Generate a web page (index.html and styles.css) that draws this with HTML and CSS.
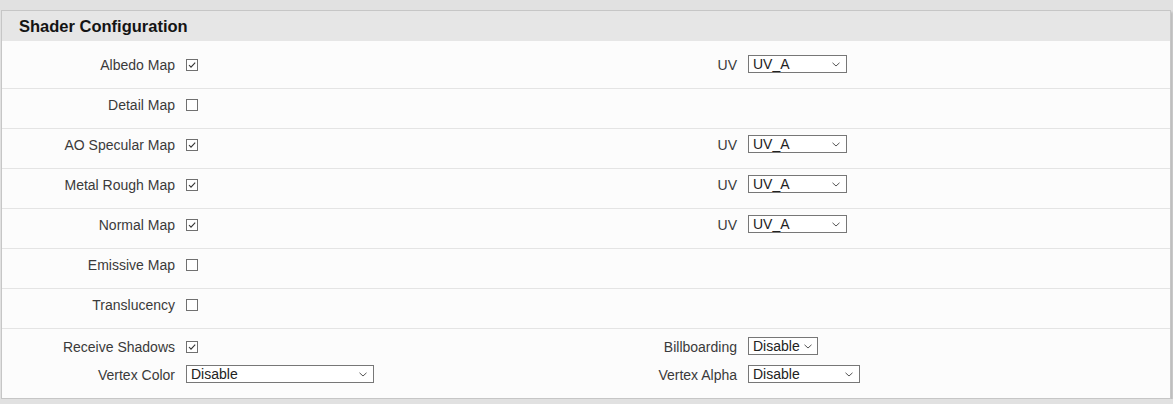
FILE: index.html
```html
<!DOCTYPE html>
<html>
<head>
<meta charset="utf-8">
<link rel="stylesheet" href="styles.css">
</head>
<body>
<div class="panel">
  <div class="panel-head">Shader Configuration</div>
  <div class="panel-body">
    <div class="row">
      <span class="label">Albedo Map</span>
      <span class="check checked"><svg viewBox="0 0 12 12"><polyline points="3,6 5,8.2 9.2,3.6"/></svg></span>
      <span class="label">UV</span>
      <span class="select w-uv"><span class="sel-text">UV_A</span><svg class="chev" viewBox="0 0 8 5"><polyline points="0.5,0.8 4,4 7.5,0.8"/></svg></span>
    </div>
    <div class="row">
      <span class="label">Detail Map</span>
      <span class="check"></span>
    </div>
    <div class="row">
      <span class="label">AO Specular Map</span>
      <span class="check checked"><svg viewBox="0 0 12 12"><polyline points="3,6 5,8.2 9.2,3.6"/></svg></span>
      <span class="label">UV</span>
      <span class="select w-uv"><span class="sel-text">UV_A</span><svg class="chev" viewBox="0 0 8 5"><polyline points="0.5,0.8 4,4 7.5,0.8"/></svg></span>
    </div>
    <div class="row">
      <span class="label">Metal Rough Map</span>
      <span class="check checked"><svg viewBox="0 0 12 12"><polyline points="3,6 5,8.2 9.2,3.6"/></svg></span>
      <span class="label">UV</span>
      <span class="select w-uv"><span class="sel-text">UV_A</span><svg class="chev" viewBox="0 0 8 5"><polyline points="0.5,0.8 4,4 7.5,0.8"/></svg></span>
    </div>
    <div class="row">
      <span class="label">Normal Map</span>
      <span class="check checked"><svg viewBox="0 0 12 12"><polyline points="3,6 5,8.2 9.2,3.6"/></svg></span>
      <span class="label">UV</span>
      <span class="select w-uv"><span class="sel-text">UV_A</span><svg class="chev" viewBox="0 0 8 5"><polyline points="0.5,0.8 4,4 7.5,0.8"/></svg></span>
    </div>
    <div class="row">
      <span class="label">Emissive Map</span>
      <span class="check"></span>
    </div>
    <div class="row">
      <span class="label">Translucency</span>
      <span class="check"></span>
    </div>
    <div class="row row-last">
      <span class="label">Receive Shadows</span>
      <span class="check checked"><svg viewBox="0 0 12 12"><polyline points="3,6 5,8.2 9.2,3.6"/></svg></span>
      <span class="label">Billboarding</span>
      <span class="select w-bill"><span class="sel-text">Disable</span><svg class="chev" viewBox="0 0 8 5"><polyline points="0.5,0.8 4,4 7.5,0.8"/></svg></span>
      <span class="label">Vertex Color</span>
      <span class="select w-vcol"><span class="sel-text">Disable</span><svg class="chev" viewBox="0 0 8 5"><polyline points="0.5,0.8 4,4 7.5,0.8"/></svg></span>
      <span class="label">Vertex Alpha</span>
      <span class="select w-valpha"><span class="sel-text">Disable</span><svg class="chev" viewBox="0 0 8 5"><polyline points="0.5,0.8 4,4 7.5,0.8"/></svg></span>
    </div>
  </div>
</div>
</body>
</html>
```
FILE: styles.css
```css
html, body {
  margin: 0;
  background: #e1e1e1;
}
body {
  padding: 10px 3px 0 1px;
  font-family: "Liberation Sans", Arial, sans-serif;
}
.panel {
  width: 1170px;
  box-sizing: border-box;
  border: 1px solid #c6c6c6;
  background: #fcfcfc;
  box-shadow: 2px 2px 2px rgba(0, 0, 0, 0.16);
}
.panel-head {
  height: 30px;
  background: #e6e6e6;
  padding-left: 17px;
  font-size: 16.5px;
  font-weight: bold;
  line-height: 30px;
  color: #141414;
}
.panel-body {
  padding-top: 8px;
}
.row {
  display: grid;
  grid-template-columns: 173px 390px 150px 1fr;
  column-gap: 11px;
  align-items: start;
  height: 40px;
  box-sizing: border-box;
  padding-top: 6px;
  border-bottom: 1px solid #e4e4e4;
}
.row-last {
  height: auto;
  border-bottom: none;
  padding-top: 8px;
  padding-bottom: 15px;
  grid-auto-rows: 18px;
  row-gap: 10px;
}
.label {
  text-align: right;
  font-size: 14px;
  line-height: 18px;
  padding-top: 1px;
  color: #3a3a3a;
  white-space: nowrap;
}
.check {
  justify-self: start;
  width: 12px;
  height: 12px;
  box-sizing: border-box;
  border: 1px solid #707070;
  background: #fff;
  margin-top: 4px;
  display: block;
}
.check svg {
  display: block;
  width: 12px;
  height: 12px;
  position: relative;
  left: -1px;
  top: -1px;
  overflow: visible;
}
.check polyline {
  fill: none;
  stroke: #333;
  stroke-width: 1.1;
}
.select {
  justify-self: start;
  display: flex;
  align-items: center;
  justify-content: space-between;
  height: 18px;
  box-sizing: border-box;
  border: 1px solid #777;
  background: #fff;
  padding: 0 6px 0 4px;
  font-size: 14px;
  color: #222;
  line-height: 15px;
}
.sel-text {
  white-space: nowrap;
}
.chev {
  width: 8px;
  height: 5px;
  flex: none;
}
.chev polyline {
  fill: none;
  stroke: #555;
  stroke-width: 1;
}
.w-uv { width: 99px; }
.w-bill { width: 70px; padding-right: 5px; }
.w-bill .sel-text { margin-right: 2px; }
.w-vcol { width: 188px; }
.w-valpha { width: 112px; }
```
